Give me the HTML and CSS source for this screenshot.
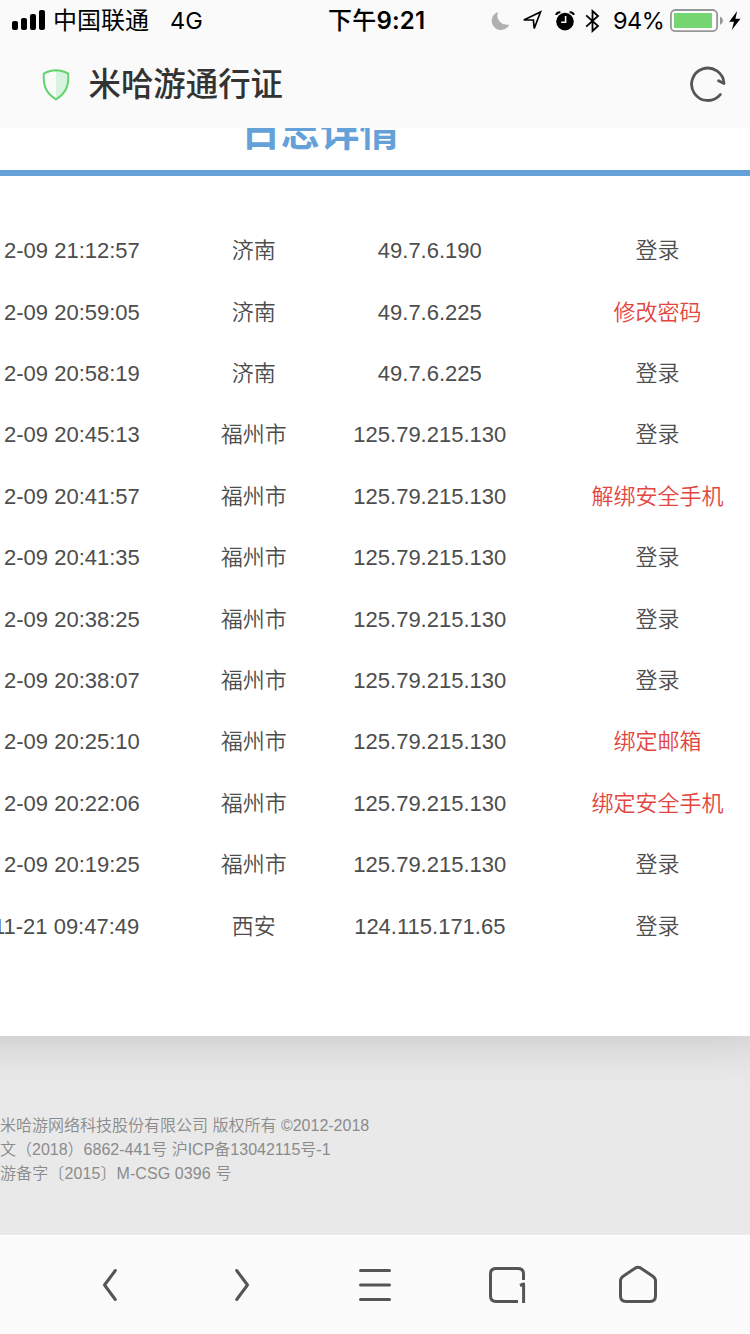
FILE: index.html
```
<!DOCTYPE html>
<html lang="zh-CN">
<head>
<meta charset="utf-8">
<title>米哈游通行证</title>
<link rel="stylesheet" href="styles.css">
</head>
<body>
<div class="screen">
  <header class="top">
    <div class="status">
      <div class="carrier">
        <svg class="signal" width="34" height="20" viewBox="0 0 34 20"><rect x="0" y="11" width="6" height="9" rx="2"/><rect x="9" y="8" width="6" height="12" rx="2"/><rect x="18" y="4" width="6" height="16" rx="2"/><rect x="27" y="0" width="6" height="20" rx="2"/></svg>
        <span class="operator">中国联通</span><span class="network">4G</span>
      </div>
      <div class="clock"><span class="ampm">下午</span>9:21</div>
      <div class="indicators">
        <svg class="moon" width="19" height="20" viewBox="0 0 19 20"><path d="M7 1A9.2 9.2 0 1 0 18.3 13.5A9.5 9.5 0 0 1 7 1Z" fill="#b0b0b0"/></svg>
        <svg class="location" width="21" height="21" viewBox="0 0 21 21"><path d="M1.8 10L18.5 2L12.2 18.5L11.4 10Z" fill="none" stroke="#000" stroke-width="1.7"/></svg>
        <svg class="alarm" width="20" height="20" viewBox="0 0 20 20"><circle cx="10" cy="10.6" r="8.8"/><path d="M1.3 4Q1.5 1.2 5.4 1.3M14.6 1.3Q18.5 1.2 18.7 4" fill="none" stroke="#000" stroke-width="2"/><path d="M10.6 5V11.3H6.2" fill="none" stroke="#fafafa" stroke-width="1.6"/></svg>
        <svg class="bluetooth" width="15" height="24" viewBox="0 0 15 24"><path d="M1.2 6.4L13 17L7.5 22V2L13 7L1.2 17.6" fill="none" stroke="#000" stroke-width="1.8"/></svg>
        <span class="percent">94%</span>
        <svg class="battery" width="54" height="24" viewBox="0 0 54 24"><rect x=".9" y="1" width="46.2" height="21.2" rx="4.5" fill="#fff" stroke="#979797" stroke-width="1.8"/><rect x="4" y="4" width="38" height="15" fill="#76d672"/><path d="M50 7.5Q53 9 53 11.7T50 16Z" fill="#979797"/></svg>
        <svg class="bolt" width="12" height="20" viewBox="0 0 12 20"><path d="M8.2 0L.2 10.8H5L2.8 19L11.5 7.8H6.4Z"/></svg>
      </div>
    </div>
    <div class="titlebar">
      <svg class="shield" width="28" height="32" viewBox="0 0 28 32"><path d="M14 1.3V30Q26.5 21.5 26.2 5Q21 1.5 14 1.3Z" fill="#d7f2de"/><path d="M14 1.2Q7 1.3 1.8 4.7C1 17 4 24 14 30.5C24 24 27 17 26.2 4.7Q21 1.3 14 1.2Z" fill="none" stroke="#62d56c" stroke-width="2" stroke-linejoin="round"/></svg>
      <h1 class="site">米哈游通行证</h1>
      <svg class="reload" width="36" height="36" viewBox="0 0 36 36"><path d="M30.3 28.6A16.2 16.2 0 1 1 34 17.5L28.6 14.8" fill="none" stroke="#555" stroke-width="2.8" stroke-linecap="round" stroke-linejoin="round"/></svg>
    </div>
  </header>
  <main class="page">
    <section class="card">
      <h2 class="tab">日志详情</h2>
      <div class="log">
        <div class="row"><span class="time">2-09 21:12:57</span><span>济南</span><span>49.7.6.190</span><span class="action">登录</span></div>
        <div class="row"><span class="time">2-09 20:59:05</span><span>济南</span><span>49.7.6.225</span><span class="action alert">修改密码</span></div>
        <div class="row"><span class="time">2-09 20:58:19</span><span>济南</span><span>49.7.6.225</span><span class="action">登录</span></div>
        <div class="row"><span class="time">2-09 20:45:13</span><span>福州市</span><span>125.79.215.130</span><span class="action">登录</span></div>
        <div class="row"><span class="time">2-09 20:41:57</span><span>福州市</span><span>125.79.215.130</span><span class="action alert">解绑安全手机</span></div>
        <div class="row"><span class="time">2-09 20:41:35</span><span>福州市</span><span>125.79.215.130</span><span class="action">登录</span></div>
        <div class="row"><span class="time">2-09 20:38:25</span><span>福州市</span><span>125.79.215.130</span><span class="action">登录</span></div>
        <div class="row"><span class="time">2-09 20:38:07</span><span>福州市</span><span>125.79.215.130</span><span class="action">登录</span></div>
        <div class="row"><span class="time">2-09 20:25:10</span><span>福州市</span><span>125.79.215.130</span><span class="action alert">绑定邮箱</span></div>
        <div class="row"><span class="time">2-09 20:22:06</span><span>福州市</span><span>125.79.215.130</span><span class="action alert">绑定安全手机</span></div>
        <div class="row"><span class="time">2-09 20:19:25</span><span>福州市</span><span>125.79.215.130</span><span class="action">登录</span></div>
        <div class="row"><span class="time early">11-21 09:47:49</span><span>西安</span><span>124.115.171.65</span><span class="action">登录</span></div>
      </div>
    </section>
    <footer class="legal">
      <p>米哈游网络科技股份有限公司 版权所有 ©2012-2018</p>
      <p>文（2018）6862-441号 沪ICP备13042115号-1</p>
      <p class="filing">游备字〔2015〕M-CSG 0396 号</p>
    </footer>
  </main>
  <nav class="toolbar">
    <svg width="40" height="40" viewBox="0 0 40 40"><path d="M25.3 5.5L14.5 20L25.3 34.5"/></svg>
    <svg width="40" height="40" viewBox="0 0 40 40"><path d="M14.7 5.5L25.5 20L14.7 34.5"/></svg>
    <svg width="40" height="40" viewBox="0 0 40 40"><path d="M6.5 5.5H35.5M6.5 20H35.5M6.5 34.5H35.5"/></svg>
    <svg width="40" height="40" viewBox="0 0 40 40"><path class="butt" d="M37.5 15V9Q37.5 3.5 32 3.5H10Q4.5 3.5 4.5 9V31Q4.5 36.5 10 36.5H32M34 20.5L37.6 19V38"/></svg>
    <svg width="40" height="40" viewBox="0 0 40 40"><path d="M17.5 2.9Q20 1.4 22.5 2.9L34.8 11.2Q37.5 13 37.5 16V31Q37.5 36.5 32 36.5H8Q2.5 36.5 2.5 31V16Q2.5 13 5.2 11.2Z"/></svg>
  </nav>
</div>
</body>
</html>
```

FILE: styles.css
```
* { box-sizing: border-box; }
body { margin: 0; }
h1, h2, p { margin: 0; }
svg { display: block; flex: none; }

.screen {
  width: 750px;
  height: 1334px;
  display: flex;
  flex-direction: column;
  overflow: hidden;
  background: #e9e9e9;
  font-family: "Liberation Sans", "Noto Sans CJK SC", sans-serif;
  white-space: nowrap;
}

.top {
  flex: none;
  height: 128px;
  background: #fafafa;
  z-index: 1;
}
.status {
  display: grid;
  grid-template-columns: 328px 99px 1fr;
  height: 41px;
  padding-top: 1px;
  align-items: center;
  font-family: Inter, "Noto Sans CJK SC", sans-serif;
  font-size: 24px;
  line-height: 40px;
  color: #000;
}
.carrier { display: flex; align-items: center; padding-left: 12px; }
.signal { margin: -2px 7px 0 0; }
.network { margin-left: 21px; font-size: 23.5px; }
.clock { font-weight: 600; font-size: 24px; letter-spacing: .2px; }
.ampm { font-weight: 500; font-size: 24px; }
.indicators { display: flex; align-items: center; padding-left: 64px; }
.indicators svg { margin-top: -1px; }
.location { margin-left: 12px; }
.alarm { margin-left: 12px; }
.bluetooth { margin-left: 10px; }
.percent { width: 50px; margin-left: 13px; font-size: 23.5px; letter-spacing: -.5px; }
.battery { margin-left: 7px; }
.bolt { margin-left: 5px; }

.titlebar {
  height: 87px;
  display: flex;
  align-items: center;
  padding: 0 24px 0 42px;
}
.site {
  margin-left: 18.6px;
  font-family: "Noto Sans CJK SC", sans-serif;
  font-size: 32.4px;
  font-weight: 500;
  line-height: 82px;
  height: 87px;
  color: #333;
}
.reload { margin-left: auto; margin-top: -1px; }

.page { flex: 1; min-height: 0; }
.card {
  height: 908px;
  margin: 0 -20px 0 -60px;
  background: #fff;
  box-shadow: 0 0 50px rgba(0, 0, 0, .18);
}
.tab {
  height: 48px;
  padding-left: 301px;
  border-bottom: 6px solid #64a1d9;
  font-family: "Noto Sans CJK SC", sans-serif;
  font-size: 39.5px;
  font-weight: 700;
  line-height: 2px;
  color: #64a1d9;
}
.log { padding: 44.3px 20px 0 60px; font-size: 22px; font-weight: 350; color: #4d4d4d; }
.row {
  display: grid;
  grid-template-columns: 165.8px 176px 176px 232.2px;
  height: 61.4px;
  line-height: 61.4px;
  text-align: center;
}
.time {
  display: flex;
  justify-content: flex-end;
  padding-right: 26px;
}
.early { padding-right: 26.5px; }
.action { padding-left: 47px; }
.alert { color: #e2463f; }

.legal {
  padding-top: 78px;
  font-size: 16px;
  font-weight: 350;
  line-height: 24px;
  color: #8b8b8b;
}
.filing { letter-spacing: .1px; }

.toolbar {
  flex: none;
  height: 99px;
  display: grid;
  grid-template-columns: repeat(5, 132px);
  justify-content: center;
  justify-items: center;
  align-items: center;
  padding: 0 2px 1px 0;
  border-top: 1px solid #fff;
  background: #fbfbfb;
  z-index: 1;
}
.toolbar path {
  fill: none;
  stroke: #555;
  stroke-width: 3;
  stroke-linecap: round;
  stroke-linejoin: round;
}
.toolbar .butt { stroke-linecap: butt; }
```
